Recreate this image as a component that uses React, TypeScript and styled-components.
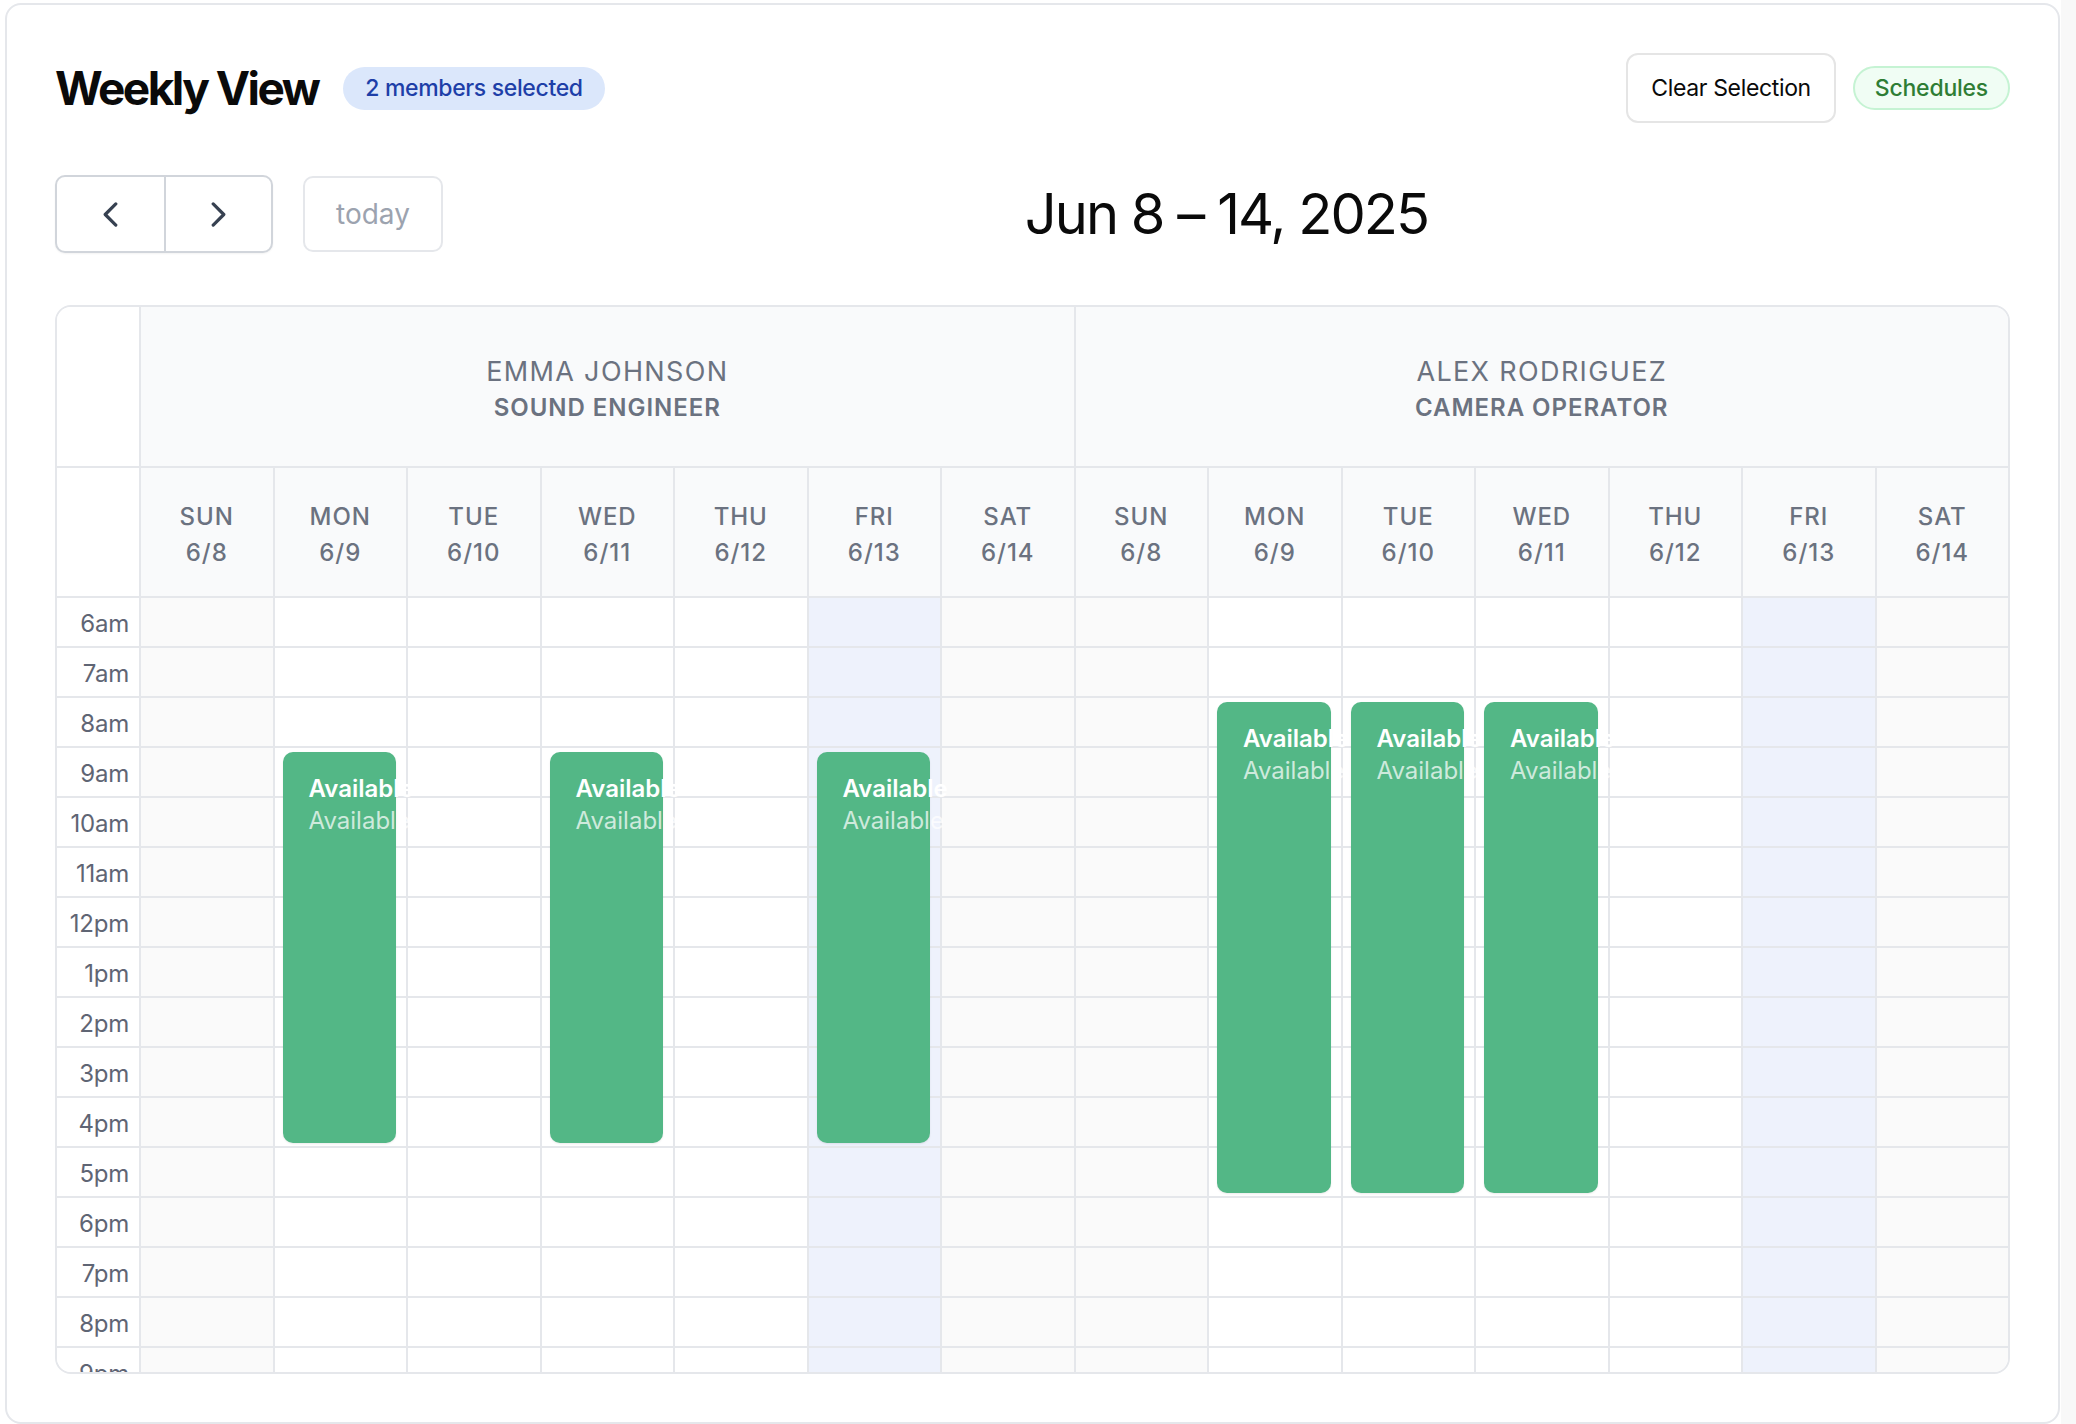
import React from "react";
import styled, { createGlobalStyle } from "styled-components";

const GlobalStyle = createGlobalStyle`
  html, body { margin: 0; padding: 0; }
  * { box-sizing: border-box; }
  body {
    font-family: Inter, "Noto Sans", "Liberation Sans", sans-serif;
    background: linear-gradient(to right, #ffffff calc(100% - 15px), #f8f8f8 calc(100% - 15px));
    color: #0a0a0a;
    -webkit-font-smoothing: antialiased;
  }
`;

const LINE = "#e5e7eb";
const SLOT_H = 50;
const FIRST_HOUR = 6;

const Page = styled.div`
  padding: 3px 16px 2px 5px;
`;

const Card = styled.section`
  background: #ffffff;
  border: 2px solid #e5e7eb;
  border-radius: 16px;
  padding: 48px;
`;

const Header = styled.header`
  display: flex;
  align-items: center;
  justify-content: space-between;
  height: 70px;
`;

const TitleGroup = styled.div`
  display: flex;
  align-items: center;
  gap: 25px;
`;

const Title = styled.h1`
  margin: 0;
  font-size: 46px;
  font-weight: 700;
  letter-spacing: -0.055em;
  color: #0a0a0a;
  line-height: 1;
`;

const Badge = styled.span`
  display: inline-flex;
  align-items: center;
  height: 43px;
  padding: 0 22px;
  border-radius: 999px;
  background: #dbe7fb;
  color: #1e3fa8;
  font-size: 23px;
  font-weight: 500;
  letter-spacing: -0.015em;
`;

const Actions = styled.div`
  display: flex;
  align-items: center;
  gap: 17px;
`;

const OutlineButton = styled.button`
  height: 70px;
  padding: 0 23px;
  border: 2px solid #e5e5e5;
  border-radius: 12px;
  background: #ffffff;
  color: #0a0a0a;
  font-family: inherit;
  font-size: 23px;
  font-weight: 400;
  letter-spacing: -0.015em;
`;

const Pill = styled.span`
  display: inline-flex;
  align-items: center;
  height: 44px;
  padding: 0 20px;
  border: 2px solid #c5f3d3;
  border-radius: 999px;
  background: #f0fdf4;
  color: #2e7d35;
  font-size: 23px;
  font-weight: 500;
  letter-spacing: -0.01em;
`;

const Toolbar = styled.div`
  display: flex;
  align-items: center;
  justify-content: space-between;
  margin-top: 52px;
  height: 78px;
`;

const ToolbarChunk = styled.div`
  display: flex;
  align-items: center;
  gap: 30px;
`;

const NavGroup = styled.div`
  display: flex;
  height: 78px;
  border: 2px solid #d1d5db;
  border-radius: 10px;
  overflow: hidden;
  background: #ffffff;
  box-shadow: 0 1px 2px rgba(0, 0, 0, 0.05);
`;

const NavButton = styled.button<{ $divided?: boolean }>`
  width: 107px;
  height: 100%;
  display: flex;
  align-items: center;
  justify-content: center;
  border: none;
  border-left: ${(p) => (p.$divided ? "2px solid #d1d5db" : "none")};
  background: transparent;
  color: #374151;
  padding: 0;
`;

const TodayButton = styled.button`
  height: 76px;
  padding: 0 31px;
  border: 2px solid #e5e7eb;
  border-radius: 10px;
  background: #ffffff;
  color: #9ca3af;
  font-family: inherit;
  font-size: 28px;
  font-weight: 400;
`;

const DateTitle = styled.h2`
  margin: 0;
  font-size: 56px;
  font-weight: 400;
  letter-spacing: -0.035em;
  color: #0a0a0a;
  line-height: 1;
`;

const Calendar = styled.div`
  margin-top: 52px;
  border: 2px solid ${LINE};
  border-radius: 16px;
  overflow: hidden;
  background: #ffffff;
`;

const HeaderGrid = styled.div`
  display: grid;
  grid-template-columns: 82px repeat(14, minmax(0, 1fr));
`;

const CornerCell = styled.div<{ $row: number }>`
  grid-column: 1;
  height: ${(p) => (p.$row === 0 ? 159 : 130)}px;
  background: #ffffff;
  border-top: ${(p) => (p.$row === 0 ? "none" : `2px solid ${LINE}`)};
`;

const ResourceCell = styled.div`
  grid-column: span 7;
  height: 159px;
  display: flex;
  flex-direction: column;
  align-items: center;
  justify-content: center;
  padding-top: 6px;
  background: #f9fafb;
  border-left: 2px solid ${LINE};
  color: #6b7280;
  text-transform: uppercase;
  line-height: 36px;
`;

const ResourceName = styled.div`
  font-size: 27px;
  font-weight: 400;
  letter-spacing: 0.05em;
`;

const ResourceRole = styled.div`
  font-size: 24px;
  font-weight: 600;
  letter-spacing: 0.04em;
`;

const DayHeadCell = styled.div`
  height: 130px;
  display: flex;
  flex-direction: column;
  align-items: center;
  justify-content: center;
  padding-top: 5px;
  background: #f9fafb;
  border-top: 2px solid ${LINE};
  border-left: 2px solid ${LINE};
  color: #6b7280;
  font-size: 24px;
  font-weight: 500;
  letter-spacing: 0.04em;
  line-height: 36px;
`;

const BodyScroller = styled.div`
  height: 776px;
  overflow: hidden;
`;

const BodyGrid = styled.div`
  display: grid;
  grid-template-columns: 82px repeat(14, minmax(0, 1fr));
`;

const AxisColumn = styled.div`
  display: flex;
  flex-direction: column;
  background: #ffffff;
`;

const TimeCell = styled.div`
  height: ${SLOT_H}px;
  border-top: 2px solid ${LINE};
  display: flex;
  align-items: center;
  justify-content: flex-end;
  padding-right: 10px;
  padding-top: 2px;
  color: #5f6574;
  font-size: 24px;
  font-weight: 400;
  letter-spacing: -0.01em;
  white-space: nowrap;
`;

type Tone = "plain" | "weekend" | "today";

const toneColor: Record<Tone, string> = {
  plain: "#ffffff",
  weekend: "#fafafa",
  today: "#eef2fc",
};

const DayColumn = styled.div<{ $tone: Tone }>`
  position: relative;
  display: flex;
  flex-direction: column;
  background: ${(p) => toneColor[p.$tone]};
  border-left: 2px solid ${LINE};
`;

const SlotCell = styled.div`
  height: ${SLOT_H}px;
  border-top: 2px solid ${LINE};
`;

const EventBlock = styled.div`
  position: absolute;
  left: 8px;
  right: 10px;
  z-index: 1;
  background: #53b786;
  border-radius: 10px;
  padding: 21px 0 0 26px;
  box-shadow: 0 1px 2px rgba(0, 0, 0, 0.08);
  white-space: nowrap;
  font-size: 24px;
  line-height: 32px;
`;

const EventTitle = styled.div`
  color: #ffffff;
  font-weight: 600;
`;

const EventSub = styled.div`
  color: rgba(255, 255, 255, 0.72);
  font-weight: 400;
`;

const Chevron = ({ dir }: { dir: "left" | "right" }) => (
  <svg width="15" height="25" viewBox="0 0 15 25" fill="none" aria-hidden="true">
    <path
      d={dir === "left" ? "M12.8 1.9 L2.2 12.5 L12.8 23.1" : "M2.2 1.9 L12.8 12.5 L2.2 23.1"}
      stroke="currentColor"
      strokeWidth="3.2"
      strokeLinecap="round"
      strokeLinejoin="round"
    />
  </svg>
);

const days = [
  { name: "SUN", date: "6/8" },
  { name: "MON", date: "6/9" },
  { name: "TUE", date: "6/10" },
  { name: "WED", date: "6/11" },
  { name: "THU", date: "6/12" },
  { name: "FRI", date: "6/13" },
  { name: "SAT", date: "6/14" },
];

type Shift = { day: number; start: number; end: number };

const resources: { name: string; role: string; shifts: Shift[] }[] = [
  {
    name: "Emma Johnson",
    role: "Sound Engineer",
    shifts: [
      { day: 1, start: 9, end: 17 },
      { day: 3, start: 9, end: 17 },
      { day: 5, start: 9, end: 17 },
    ],
  },
  {
    name: "Alex Rodriguez",
    role: "Camera Operator",
    shifts: [
      { day: 1, start: 8, end: 18 },
      { day: 2, start: 8, end: 18 },
      { day: 3, start: 8, end: 18 },
    ],
  },
];

const hourLabel = (h: number) => {
  const suffix = h < 12 ? "am" : "pm";
  const v = h % 12 === 0 ? 12 : h % 12;
  return `${v}${suffix}`;
};

const hours = Array.from({ length: 17 }, (_, i) => FIRST_HOUR + i);

const toneFor = (day: number): Tone => {
  if (day === 5) return "today";
  if (day === 0 || day === 6) return "weekend";
  return "plain";
};

export default function App() {
  return (
    <>
      <GlobalStyle />
      <Page>
        <Card>
          <Header>
            <TitleGroup>
              <Title>Weekly View</Title>
              <Badge>2 members selected</Badge>
            </TitleGroup>
            <Actions>
              <OutlineButton type="button">Clear Selection</OutlineButton>
              <Pill>Schedules</Pill>
            </Actions>
          </Header>

          <Toolbar>
            <ToolbarChunk>
              <NavGroup>
                <NavButton type="button" aria-label="prev">
                  <Chevron dir="left" />
                </NavButton>
                <NavButton type="button" aria-label="next" $divided>
                  <Chevron dir="right" />
                </NavButton>
              </NavGroup>
              <TodayButton type="button">today</TodayButton>
            </ToolbarChunk>
            <ToolbarChunk>
              <DateTitle>Jun 8 – 14, 2025</DateTitle>
            </ToolbarChunk>
            <ToolbarChunk />
          </Toolbar>

          <Calendar>
            <HeaderGrid>
              <CornerCell $row={0} />
              {resources.map((r) => (
                <ResourceCell key={r.name}>
                  <ResourceName>{r.name}</ResourceName>
                  <ResourceRole>{r.role}</ResourceRole>
                </ResourceCell>
              ))}
              <CornerCell $row={1} />
              {resources.map((r) =>
                days.map((d) => (
                  <DayHeadCell key={`${r.name}-${d.name}`}>
                    <span>{d.name}</span>
                    <span>{d.date}</span>
                  </DayHeadCell>
                ))
              )}
            </HeaderGrid>

            <BodyScroller>
              <BodyGrid>
                <AxisColumn>
                  {hours.map((h) => (
                    <TimeCell key={h}>{hourLabel(h)}</TimeCell>
                  ))}
                </AxisColumn>
                {resources.map((r) =>
                  days.map((d, di) => (
                    <DayColumn key={`${r.name}-${d.name}`} $tone={toneFor(di)}>
                      {hours.map((h) => (
                        <SlotCell key={h} />
                      ))}
                      {r.shifts
                        .filter((s) => s.day === di)
                        .map((s) => (
                          <EventBlock
                            key={`${s.day}-${s.start}`}
                            style={{
                              top: (s.start - FIRST_HOUR) * SLOT_H + 6,
                              height: (s.end - s.start) * SLOT_H - 9,
                            }}
                          >
                            <EventTitle>Available</EventTitle>
                            <EventSub>Available</EventSub>
                          </EventBlock>
                        ))}
                    </DayColumn>
                  ))
                )}
              </BodyGrid>
            </BodyScroller>
          </Calendar>
        </Card>
      </Page>
    </>
  );
}
